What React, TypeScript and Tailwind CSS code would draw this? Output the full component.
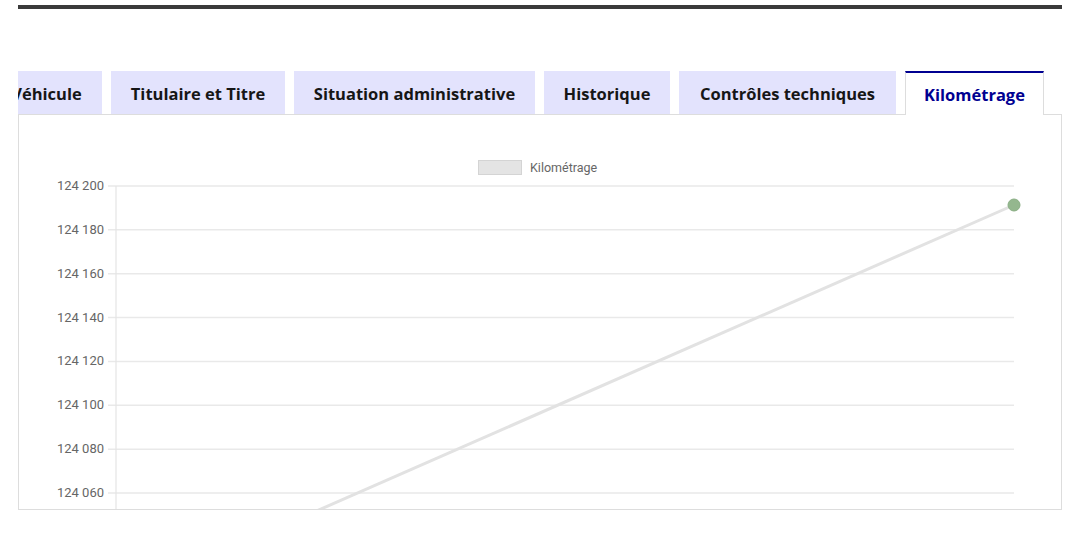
import React from "react";

const tabs = [
  { label: "Véhicule", w: "w-[111px]" },
  { label: "Titulaire et Titre", w: "w-[174px]" },
  { label: "Situation administrative", w: "w-[241px]" },
  { label: "Historique", w: "w-[126px]" },
  { label: "Contrôles techniques", w: "w-[217px]" },
];

const yLabels = ["124 200", "124 180", "124 160", "124 140", "124 120", "124 100", "124 080", "124 060"];

export default function App() {
  const gridTop = 71;
  const step = 43.86;
  return (
    <div className="w-[1080px] h-[535px] bg-white overflow-hidden" style={{ fontFamily: "'Open Sans', Lato, sans-serif" }}>
      <div className="mx-[18px] mt-[5px] h-[4px] bg-[#3a3a3a]" />
      <div className="mx-[18px] mt-[62px] overflow-hidden">
        <div className="flex gap-[9px] ml-[-27px] h-[44px] items-start">
          {tabs.map((t) => (
            <div
              key={t.label}
              className={`${t.w} h-[43px] shrink-0 bg-[#e3e3fd] flex items-center justify-center pt-[3px] text-[16.5px] font-bold text-[#161616] whitespace-nowrap`}
            >
              {t.label}
            </div>
          ))}
          <div className="w-[139px] h-[44px] shrink-0 bg-white border-t-2 border-t-[#000091] border-x border-x-[#dddddd] flex items-center justify-center pt-[2px] text-[16.5px] font-bold text-[#000091] whitespace-nowrap">
            Kilométrage
          </div>
        </div>
      </div>
      <div className="mx-[18px] mt-[-1px] h-[396px] border border-[#dddddd] overflow-hidden">
        <svg width="1042" height="394" viewBox="0 0 1042 394" style={{ fontFamily: "Roboto, sans-serif" }}>
          <rect x="459.5" y="45.5" width="43" height="14" fill="#e4e4e4" stroke="#d4d4d4" strokeWidth="1" />
          <text x="511" y="53.5" fontSize="12.5" fill="#666" dominantBaseline="middle">Kilométrage</text>
          {yLabels.map((l, i) => {
            const y = gridTop + i * step;
            return (
              <g key={l}>
                <line x1="89" x2="995" y1={y} y2={y} stroke="#e9e9e9" strokeWidth="1.5" />
                <text x="85" y={y + 0.5} fontSize="13" fill="#666" textAnchor="end" dominantBaseline="middle">{l}</text>
              </g>
            );
          })}
          <line x1="89" x2="995" y1={gridTop + 8 * step} y2={gridTop + 8 * step} stroke="#e9e9e9" strokeWidth="1.5" />
          <line x1="97" x2="97" y1={gridTop} y2="400" stroke="#e4e4e4" strokeWidth="1.2" />
          <line x1="995" y1="90" x2="220" y2="430" stroke="#e2e2e2" strokeWidth="3" />
          <circle cx="995" cy="90" r="6" fill="#94b78e" stroke="#8aae84" strokeWidth="1" />
        </svg>
      </div>
    </div>
  );
}
